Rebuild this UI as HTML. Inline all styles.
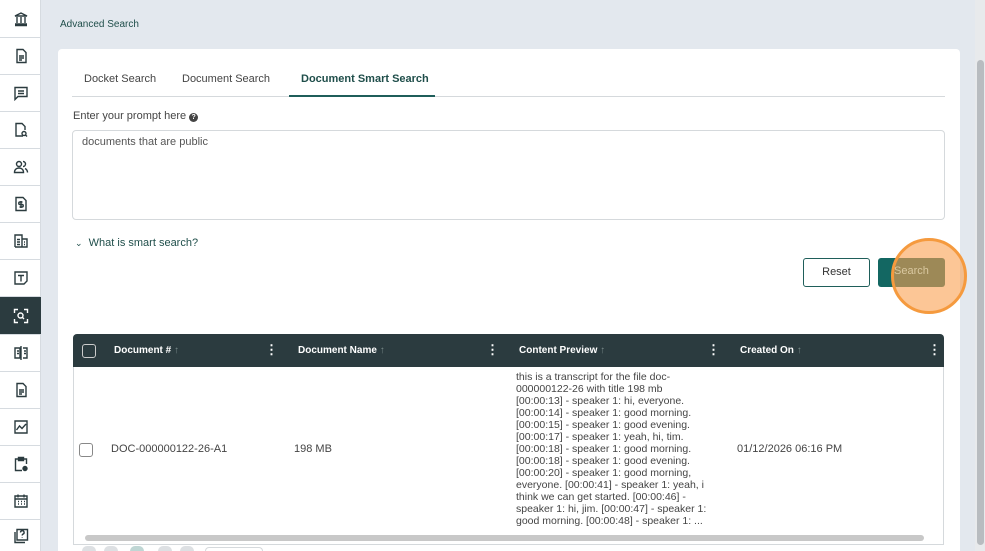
<!DOCTYPE html>
<html><head><style>
*{box-sizing:border-box;margin:0;padding:0}
html{overflow:hidden;width:985px;height:551px}
body{width:985px;height:551px;overflow:hidden;background:#e3e8ee;font-family:"Liberation Sans",sans-serif;position:relative;color:#333}
.sb{position:absolute;left:0;top:0;width:41px;height:551px;background:#fff;border-right:1px solid #d6dbe0}
.it{position:absolute;left:0;width:41px;height:37px;border-bottom:1px solid #d6dbe0;display:flex;align-items:center;justify-content:center}
.it.act{background:#2b3b3f}
.it svg{width:16px;height:16px;fill:none;stroke:#2b3b3f;stroke-width:1.4}
.it.act svg{stroke:#fff}
.card{position:absolute;left:58px;top:49px;width:902px;height:502px;background:#fff;border-radius:4px 4px 0 0}
.abs{position:absolute}
.tab{position:absolute;top:73px;font-size:11px;color:#444}
.hd{position:absolute;left:73px;top:334px;width:871px;height:33px;background:#2b3b3f;border-radius:4px 4px 0 0;color:#fff;font-size:10px;font-weight:bold}
.hd span{position:absolute;top:11px}
.kb{font-size:13px;top:8px!important;font-weight:bold}
.cb{position:absolute;width:14px;height:14px;border:1px solid #888;border-radius:3px}
.pg{position:absolute;top:546px;width:14px;height:5px;border-radius:7px 7px 0 0;background:#dde0e3}
</style></head><body>
<div class="sb">
<div class="it" style="top:1px"><svg viewBox="0 0 16 16"><path d="M2 5 8 2l6 3H2zM4 6v6M8 6v6M12 6v6M2 13h12M2 14.5h12"/></svg></div>
<div class="it" style="top:38px"><svg viewBox="0 0 16 16"><path d="M4 1.5h6l3 3V14.5H4zM6 8h5M6 10h5M6 12h3"/></svg></div>
<div class="it" style="top:75px"><svg viewBox="0 0 16 16"><path d="M2 2.5h12v9H5l-3 3zM5 6h6M5 8.5h6"/></svg></div>
<div class="it" style="top:112px"><svg viewBox="0 0 16 16"><path d="M10 14H3V1.5h6l3 3V8"/><circle cx="11" cy="11.5" r="2"/><path d="M12.5 13 14 14.5"/></svg></div>
<div class="it" style="top:149px"><svg viewBox="0 0 16 16"><circle cx="6" cy="5" r="2.5"/><path d="M1.5 13.5c0-3 2-4.5 4.5-4.5s4.5 1.5 4.5 4.5zM10 2.5a2.5 2.5 0 0 1 0 5M12 9.5c1.5.7 2.5 2 2.5 4"/></svg></div>
<div class="it" style="top:186px"><svg viewBox="0 0 16 16"><path d="M3 1.5h7l3 3v10H3zM9.5 6h-2.5a1.2 1.2 0 0 0 0 2.5h2a1.2 1.2 0 0 1 0 2.5H6.5M8 5v7"/></svg></div>
<div class="it" style="top:223px"><svg viewBox="0 0 16 16"><path d="M2 14V2h7v12M9 6h5v8H2M4 4v0M4 6.5h3M4 9h3M4 11.5h3M11 9h1M11 11.5h1"/></svg></div>
<div class="it" style="top:260px"><svg viewBox="0 0 16 16"><path d="M2 2h12v9l-3 3H2zM5 5.5h6M8 5.5v6"/></svg></div>
<div class="it act" style="top:297px;height:38px"><svg viewBox="0 0 16 16"><path d="M1.5 5V1.5H5M11 1.5h3.5V5M14.5 11v3.5H11M5 14.5H1.5V11"/><circle cx="7.5" cy="7.5" r="2.5"/><path d="M9.3 9.3 11 11"/></svg></div>
<div class="it" style="top:335px"><svg viewBox="0 0 16 16"><path d="M8 1v14M2 3h5v10H2zM10 3h4v10h-4M4 6h2M4 8.5h2M11 6h2M11 8.5h2"/></svg></div>
<div class="it" style="top:372px"><svg viewBox="0 0 16 16"><path d="M4 1.5h6l3 3V14.5H4zM6 8h5M6 10h5M6 12h3"/></svg></div>
<div class="it" style="top:409px"><svg viewBox="0 0 16 16"><path d="M2 2h12v12H2zM3.5 11l3-4 2.5 2.5L13 5"/></svg></div>
<div class="it" style="top:446px"><svg viewBox="0 0 16 16"><path d="M9 14.5H2.5V3h11v5M5.5 1.5h5v3h-5z"/><circle cx="12" cy="12.5" r="2" fill="#2b3b3f"/></svg></div>
<div class="it" style="top:483px"><svg viewBox="0 0 16 16"><path d="M2 3h12v11H2zM2 6h12M5 1.5v3M11 1.5v3M5 8.5h1M8 8.5h1M11 8.5h1M5 11h1M8 11h1M11 11h1"/></svg></div>
<div class="it" style="top:520px;height:31px;border:0"><svg viewBox="0 0 16 16"><path d="M4 1.5h10.5V12H4zM2 4v10.5h10M7.5 4.5a1.8 1.8 0 1 1 2.3 1.7c-.5.2-.6.6-.6 1.3M9.2 9.5v.5"/></svg></div>
</div>
<div class="abs" style="left:60px;top:19px;font-size:10px;color:#1f4e4a">Advanced Search</div>
<div class="card"></div>
<div class="tab" style="left:84px">Docket Search</div>
<div class="tab" style="left:182px">Document Search</div>
<div class="tab" style="left:301px;font-weight:bold;color:#1f4e4a">Document Smart Search</div>
<div class="abs" style="left:72px;top:96px;width:873px;height:1px;background:#d5d9dc"></div>
<div class="abs" style="left:289px;top:95px;width:146px;height:2px;background:#1f5e5a"></div>
<div class="abs" style="left:73px;top:110px;font-size:11px;color:#444">Enter your prompt here <span style="display:inline-block;width:9px;height:9px;border-radius:50%;background:#444;color:#fff;font-size:7px;text-align:center;line-height:9px;font-weight:bold">?</span></div>
<div class="abs" style="left:72px;top:130px;width:873px;height:90px;border:1px solid #d5d9dc;border-radius:4px"></div>
<div class="abs" style="left:82px;top:136px;font-size:11px;color:#555">documents that are public</div>
<div class="abs" style="left:75px;top:237px;font-size:11px;color:#1f4e4a"><span style="font-size:9px">&#8964;</span>&nbsp; What is smart search?</div>
<div class="abs" style="left:803px;top:258px;width:67px;height:29px;border:1px solid #1f5e5a;border-radius:3px;font-size:11px;color:#333;text-align:center;line-height:27px">Reset</div>
<div class="abs" style="left:878px;top:258px;width:67px;height:29px;background:#136762;border-radius:3px"></div>
<div class="abs" style="left:891px;top:238px;width:76px;height:76px;border-radius:50%;background:rgba(250,160,80,.6);border:3px solid #f59a3e"></div>
<div class="abs" style="left:894px;top:265px;font-size:11px;color:#d9c8a0">Search</div>
<div class="hd">
<div class="cb" style="left:9px;top:10px;border-color:#ccc"></div>
<span style="left:41px">Document # <span style="color:#788;position:static">↑</span></span><span class="kb" style="left:192px">⋮</span>
<span style="left:225px">Document Name <span style="color:#788;position:static">↑</span></span><span class="kb" style="left:413px">⋮</span>
<span style="left:446px">Content Preview <span style="color:#788;position:static">↑</span></span><span class="kb" style="left:634px">⋮</span>
<span style="left:667px">Created On <span style="color:#788;position:static">↑</span></span><span class="kb" style="left:855px">⋮</span>
</div>
<div class="abs" style="left:73px;top:367px;width:871px;height:178px;border:1px solid #d5d9dc;border-top:0"></div>
<div class="cb" style="left:79px;top:443px"></div>
<div class="abs" style="left:111px;top:443px;font-size:11px;color:#444">DOC-000000122-26-A1</div>
<div class="abs" style="left:294px;top:443px;font-size:11px;color:#444">198 MB</div>
<div class="abs" style="left:516px;top:371px;width:210px;font-size:10.5px;line-height:12px;color:#444">this is a transcript for the file doc-<br>000000122-26 with title 198 mb<br>[00:00:13] - speaker 1: hi, everyone.<br>[00:00:14] - speaker 1: good morning.<br>[00:00:15] - speaker 1: good evening.<br>[00:00:17] - speaker 1: yeah, hi, tim.<br>[00:00:18] - speaker 1: good morning.<br>[00:00:18] - speaker 1: good evening.<br>[00:00:20] - speaker 1: good morning,<br>everyone. [00:00:41] - speaker 1: yeah, i<br>think we can get started. [00:00:46] -<br>speaker 1: hi, jim. [00:00:47] - speaker 1:<br>good morning. [00:00:48] - speaker 1: ...</div>
<div class="abs" style="left:737px;top:443px;font-size:11px;color:#444">01/12/2026 06:16 PM</div>
<div class="abs" style="left:85px;top:535px;width:839px;height:6px;border-radius:3px;background:#c8c8c8"></div>
<div class="pg" style="left:82px"></div><div class="pg" style="left:104px"></div><div class="pg" style="left:130px;background:#bfd6d4"></div><div class="pg" style="left:158px"></div><div class="pg" style="left:180px"></div>
<div class="abs" style="left:205px;top:547px;width:58px;height:4px;border:1px solid #d5d9dc;border-bottom:0;border-radius:7px 7px 0 0"></div>
<div class="abs" style="left:975px;top:0;width:10px;height:551px;background:#e8eaec"></div>
<div class="abs" style="left:977px;top:60px;width:7px;height:485px;border-radius:4px;background:#b8bcc0"></div>
</body></html>
